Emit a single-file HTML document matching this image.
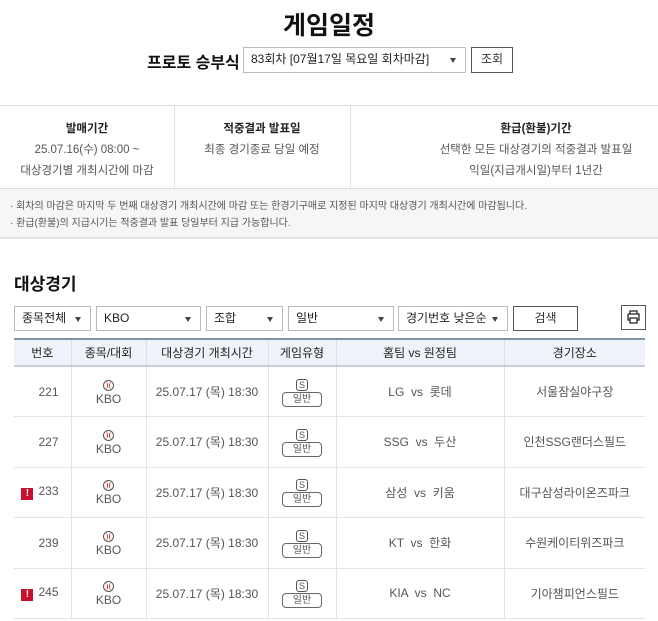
<!DOCTYPE html><html><head><meta charset="utf-8"><style>
*{margin:0;padding:0;box-sizing:border-box}
body{width:658px;height:621px;overflow:hidden;background:#fff;font-family:"Liberation Sans","Noto Sans CJK KR",sans-serif;color:#333;position:relative}
.a{position:absolute}
.sel{position:absolute;border:1px solid #bbb;height:25px;font-size:12px;line-height:23px;padding-left:7px;color:#222;background:#fff}
.sel:after{content:"";position:absolute;right:9px;top:10px;border:3.5px solid transparent;border-top:5px solid #444}
.btn{position:absolute;border:1px solid #555;height:25px;font-size:12px;line-height:23px;text-align:center;background:#fff;color:#333}
.c{position:absolute;text-align:center;font-size:11.5px}
table{position:absolute;left:14px;top:338px;width:631px;border-collapse:collapse;font-size:12px;color:#555}
th{background:#eef2f9;height:27px;font-weight:normal;color:#222;border-top:2px solid #8592a8;border-bottom:2px solid #c8cfdb;border-left:1px solid #dde;}
td{height:50.5px;border-bottom:1px solid #e4e4e4;border-left:1px solid #e4e4e4;text-align:center}
th:first-child,td:first-child{border-left:none}
.ball{display:inline-block;width:11px;height:11px;border:1px solid #555;border-radius:50%;position:relative;margin-bottom:-2px}
.ball:before,.ball:after{content:"";position:absolute;top:1px;width:3px;height:7px;border:1px solid #c33;border-radius:50%}
.ball:before{left:0;border-left:none;border-top:none;border-bottom:none}
.ball:after{right:0;border-right:none;border-top:none;border-bottom:none}
.s{display:inline-block;width:12px;height:12px;border:1px solid #555;border-radius:3px;font-size:9px;line-height:10px}
.g{display:block;margin:1px auto 0;width:40px;height:15px;border:1px solid #666;border-radius:4px;font-size:10px;line-height:13px;color:#555}
.ex{display:inline-block;width:12px;height:12px;background:#c8102e;color:#fff;font-weight:bold;font-size:10px;line-height:12px;text-align:center;margin-right:5px;vertical-align:-1px}
</style></head><body>
<div class="a" style="left:0;width:658px;top:6px;text-align:center;font-size:25px;font-weight:bold;color:#111">게임일정</div>
<div class="a" style="left:147px;top:49px;font-size:16px;font-weight:bold;color:#111">프로토 승부식</div>
<div class="sel" style="left:243px;top:47px;width:223px;height:26px;font-size:12px">83회차 [07월17일 목요일 회차마감]</div>
<div class="btn" style="left:471px;top:47px;width:42px;height:26px">조회</div>
<div class="a" style="left:0;top:105px;width:658px;height:84px;border-top:1px solid #ddd;border-bottom:1px solid #ddd"></div>
<div class="a" style="left:174px;top:106px;width:1px;height:82px;background:#e2e2e2"></div>
<div class="a" style="left:350px;top:106px;width:1px;height:82px;background:#e2e2e2"></div>
<div class="c" style="left:0;width:174px;top:119px;line-height:21px;color:#555"><b style="color:#222">발매기간</b><br>25.07.16(수) 08:00 ~<br>대상경기별 개최시간에 마감</div>
<div class="c" style="left:174px;width:176px;top:119px;line-height:21px;color:#555"><b style="color:#222">적중결과 발표일</b><br>최종 경기종료 당일 예정</div>
<div class="c" style="left:440px;width:192px;top:119px;line-height:21px;color:#555;white-space:nowrap;display:flex;flex-direction:column;align-items:center"><b style="color:#222">환급(환불)기간</b><span>선택한 모든 대상경기의 적중결과 발표일</span><span>익일(지급개시일)부터 1년간</span></div>
<div class="a" style="left:0;top:189px;width:658px;height:50px;background:#f5f6f8;border-bottom:2px solid #e3e3e3;font-size:10px;color:#555;line-height:17px;padding:9px 0 0 10px;white-space:nowrap">· 회차의 마감은 마지막 두 번째 대상경기 개최시간에 마감 또는 한경기구매로 지정된 마지막 대상경기 개최시간에 마감됩니다.<br>· 환급(환불)의 지급시기는 적중결과 발표 당일부터 지급 가능합니다.</div>
<div class="a" style="left:14px;top:270px;font-size:17px;font-weight:bold;color:#111">대상경기</div>
<div class="sel" style="left:14px;top:306px;width:77px">종목전체</div>
<div class="sel" style="left:96px;top:306px;width:105px">KBO</div>
<div class="sel" style="left:206px;top:306px;width:77px">조합</div>
<div class="sel" style="left:288px;top:306px;width:106px">일반</div>
<div class="sel" style="left:398px;top:306px;width:110px">경기번호 낮은순</div>
<div class="btn" style="left:513px;top:306px;width:65px">검색</div>
<div class="btn" style="left:621px;top:305px;width:25px;height:25px">
<svg width="15" height="14" viewBox="0 0 15 14" style="margin-top:4px"><path d="M4 4V1h7v3M2 4h11v6h-2M4 10H2V4M4 8h7v5H4z" fill="none" stroke="#222" stroke-width="1.3"/></svg></div>
<table>
<tr><th style="width:57px">번호</th><th style="width:75px">종목/대회</th><th style="width:122px">대상경기 개최시간</th><th style="width:68px">게임유형</th><th style="width:168px">홈팀 vs 원정팀</th><th>경기장소</th></tr>
<tr><td style="text-align:right;padding-right:12px">221</td><td><span class="ball"></span><br>KBO</td><td>25.07.17 (목) 18:30</td><td><span class="s">S</span><span class="g">일반</span></td><td>LG &nbsp;vs &nbsp;롯데</td><td>서울잠실야구장</td></tr>
<tr><td style="text-align:right;padding-right:12px">227</td><td><span class="ball"></span><br>KBO</td><td>25.07.17 (목) 18:30</td><td><span class="s">S</span><span class="g">일반</span></td><td>SSG &nbsp;vs &nbsp;두산</td><td>인천SSG랜더스필드</td></tr>
<tr><td style="text-align:right;padding-right:12px"><span class="ex">!</span>233</td><td><span class="ball"></span><br>KBO</td><td>25.07.17 (목) 18:30</td><td><span class="s">S</span><span class="g">일반</span></td><td>삼성 &nbsp;vs &nbsp;키움</td><td>대구삼성라이온즈파크</td></tr>
<tr><td style="text-align:right;padding-right:12px">239</td><td><span class="ball"></span><br>KBO</td><td>25.07.17 (목) 18:30</td><td><span class="s">S</span><span class="g">일반</span></td><td>KT &nbsp;vs &nbsp;한화</td><td>수원케이티위즈파크</td></tr>
<tr><td style="text-align:right;padding-right:12px"><span class="ex">!</span>245</td><td><span class="ball"></span><br>KBO</td><td>25.07.17 (목) 18:30</td><td><span class="s">S</span><span class="g">일반</span></td><td>KIA &nbsp;vs &nbsp;NC</td><td>기아챔피언스필드</td></tr>
</table>
</body></html>
